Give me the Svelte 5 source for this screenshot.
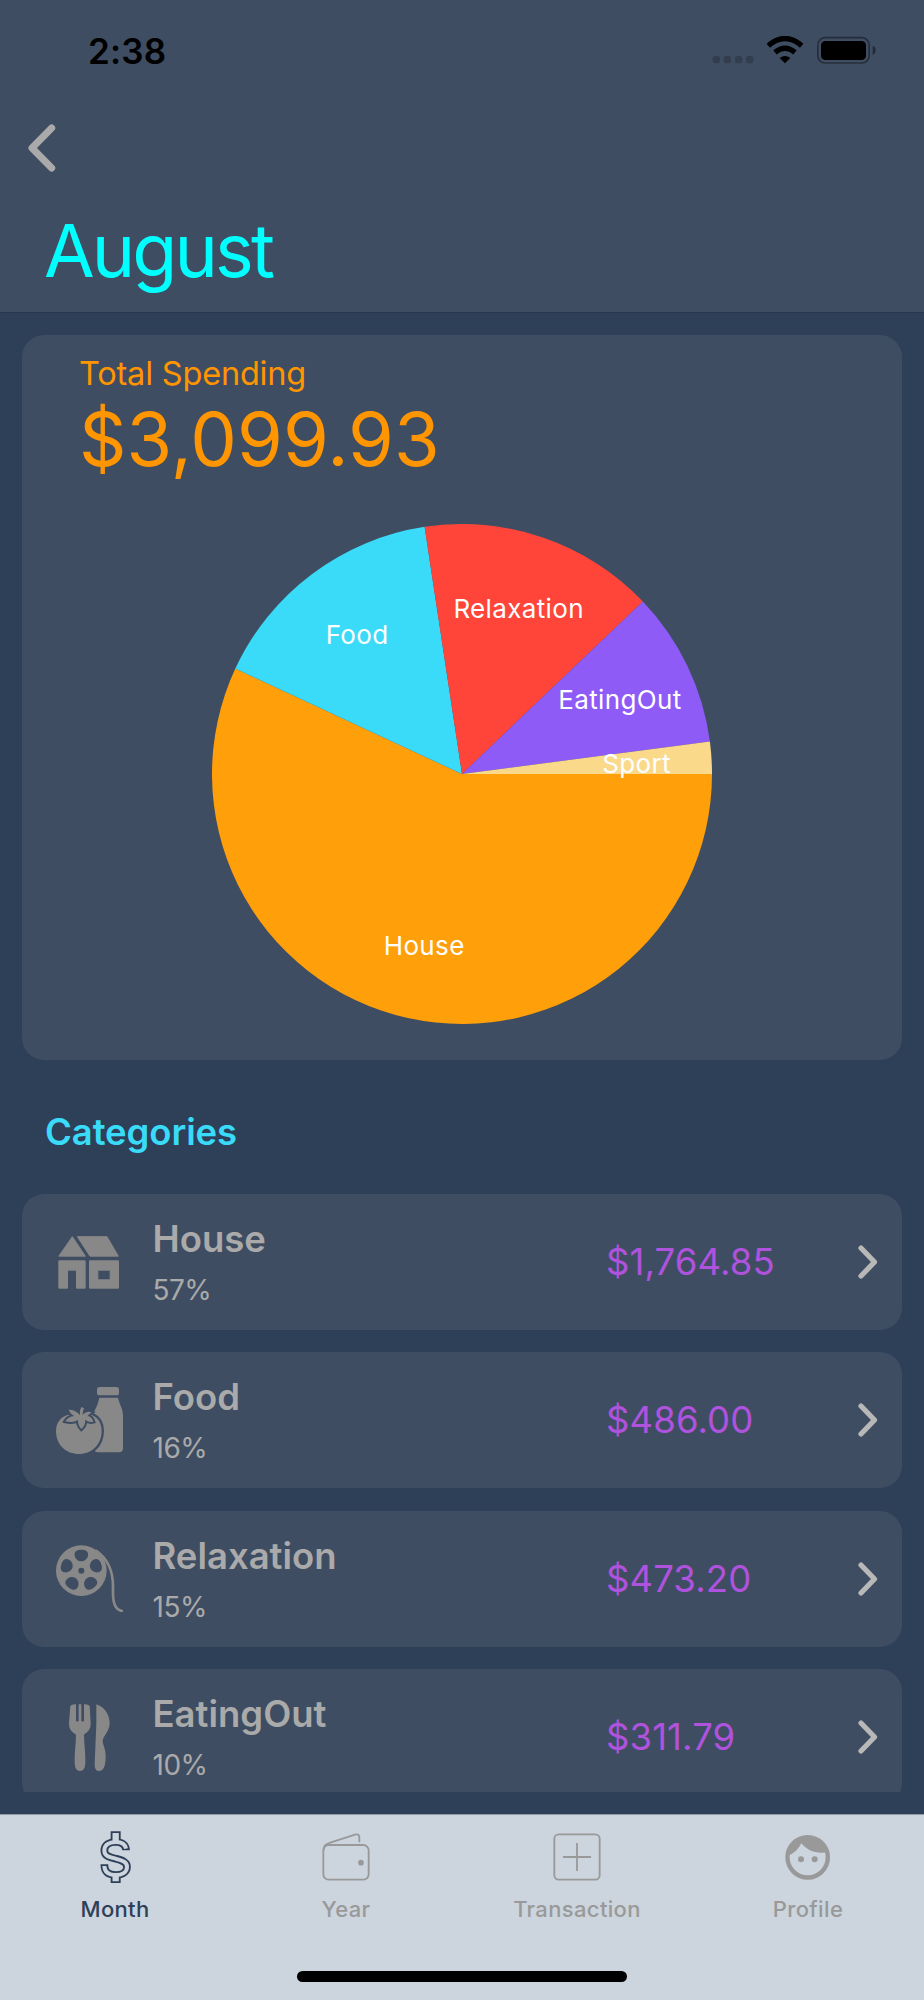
<script lang="ts">
	const total = 3099.93;

	let categories = [
		{ name: 'House', amount: 1764.85, color: '#ff9f0a', icon: 'house' },
		{ name: 'Food', amount: 486.0, color: '#39dbf8', icon: 'food' },
		{ name: 'Relaxation', amount: 473.2, color: '#ff453a', icon: 'film' },
		{ name: 'EatingOut', amount: 311.79, color: '#8e5bf7', icon: 'cutlery' },
		{ name: 'Sport', amount: 64.09, color: '#fad98b', icon: '' }
	];

	const tabs = ['Month', 'Year', 'Transaction', 'Profile'];
	let activeTab = 'Month';

	const radius = 250;

	function point(angle, r) {
		return [Math.cos(angle) * r, Math.sin(angle) * r];
	}

	function buildSlices(items) {
		let start = 0;
		return items.map((item) => {
			const end = start + (item.amount / total) * Math.PI * 2;
			const [x1, y1] = point(start, radius);
			const [x2, y2] = point(end, radius);
			const [lx, ly] = point((start + end) / 2, radius * 0.7);
			const large = end - start > Math.PI ? 1 : 0;
			start = end;
			return {
				...item,
				d: `M0 0L${x1} ${y1}A${radius} ${radius} 0 ${large} 1 ${x2} ${y2}Z`,
				lx,
				ly
			};
		});
	}

	function money(value) {
		return '$' + value.toLocaleString('en-US', { minimumFractionDigits: 2 });
	}

	$: slices = buildSlices(categories);
	$: rows = categories.slice(0, 4);
</script>

<div class="screen">
	<header>
		<div class="status">
			<span class="time">2:38</span>
			<svg class="statusIcons" viewBox="0 0 492 84">
				<g fill="#000" opacity="0.2">
					<rect x="2" y="60" width="22" height="22" rx="7" />
					<rect x="35" y="60" width="22" height="22" rx="7" />
					<rect x="69" y="60" width="22" height="22" rx="7" />
					<rect x="102" y="60" width="22" height="22" rx="7" />
				</g>
				<path d="M169 29Q219 -14 269 29" fill="none" stroke="#000" stroke-width="16" />
				<path d="M189 49Q219 25 249 49" fill="none" stroke="#000" stroke-width="16" />
				<path d="M203 66Q219 54 235 66L219 82Z" />
				<rect
					x="317.5"
					y="5"
					width="154"
					height="76"
					rx="22"
					fill="none"
					stroke="#000"
					stroke-opacity="0.4"
					stroke-width="5"
				/>
				<rect x="327" y="15" width="135" height="57" rx="13" />
				<path d="M482 29Q491 33 491 43T482 57Z" opacity="0.45" />
			</svg>
		</div>
		<button class="back" aria-label="Back">
			<svg viewBox="0 0 28 48">
				<path d="M23.7 4L4 24L23.7 44" />
			</svg>
		</button>
		<h1>August</h1>
	</header>

	<main>
		<section class="summary">
			<p class="label">Total Spending</p>
			<p class="total">{money(total)}</p>
			<svg class="pie" viewBox="-250 -250 500 500">
				{#each slices as slice}
					<path d={slice.d} fill={slice.color} />
				{/each}
				{#each slices as slice}
					<text x={slice.lx} y={slice.ly + 10}>{slice.name}</text>
				{/each}
			</svg>
		</section>

		<h2>Categories</h2>

		<div class="list">
			{#each rows as row}
				<div class="row">
					<svg class="icon" viewBox="0 0 201 201">
						{#if row.icon === 'house'}
							<g stroke="#888" stroke-width="3" stroke-linejoin="round">
								<path d="M8.5 84.5L49 26L88 84.5Z" />
								<path d="M64 26H153L187 84.5H102Z" />
								<path d="M8.5 98.5H87.5V180.5H61.5V126.5H34.5V180.5H8.5Z" />
								<path
									fill-rule="evenodd"
									d="M100.5 98.5H187.5V180.5H100.5ZM125.5 126.5V155.5H162.5V126.5Z"
								/>
							</g>
						{:else if row.icon === 'food'}
							<rect x="123" y="0" width="66" height="25" rx="8" />
							<path
								d="M130 32H186C190 52 201 64 201 86V184Q201 196 189 196H128Q118 196 112 188V78C121 62 126 50 130 32Z"
							/>
							<path
								class="cut"
								d="M69 86C92 74 137 82 137 132C137 174 106 201 69 201C31 201 0 174 0 132C0 88 44 74 69 86Z"
							/>
							<path
								class="cut leaf"
								d="M72 84Q70 70 76 60L84 64Q79 74 80 83Q92 70 107 76Q99 82 94 87Q108 89 112 104Q98 108 88 98Q88 116 76 126Q65 114 66 99Q51 109 28 103Q36 89 55 87Q44 82 38 68Q58 68 72 84Z"
							/>
						{:else if row.icon === 'film'}
							<circle cx="76" cy="77" r="76" />
							<circle class="hole" cx="76" cy="77" r="9" />
							{#each [0, 72, 144, 216, 288] as turn}
								<path
									class="hole"
									transform="rotate({turn} 76 77)"
									d="M76 14C93 14 98 22 96 32C94 42 85 49 76 49C67 49 58 42 56 32C54 22 59 14 76 14Z"
								/>
							{/each}
							<path
								d="M122 18C158 44 171 78 171 124V145C171 176 178 195 198 198"
								fill="none"
								stroke="#888"
								stroke-width="8"
								stroke-linecap="round"
							/>
						{:else}
							<path
								d="M43 5Q50 1 60 1V50Q64 55 68 50V1H76V50Q80 55 84 50V1Q94 1 101 5L104 58C104 78 95 84 84 92C84 120 89 145 88 177Q87 201 72 201Q57 201 56 177C55 145 60 120 60 92C48 84 39 78 39 58Z"
							/>
							<path
								d="M121 1C145 8 161 33 161 57C161 82 140 97 140 112C140 122 149 132 149 158C149 185 143 201 129 201Q115 201 116 179L121 60Z"
							/>
						{/if}
					</svg>
					<div class="info">
						<span class="name">{row.name}</span>
						<span class="percent">{Math.round((row.amount / total) * 100)}%</span>
					</div>
					<span class="amount">{money(row.amount)}</span>
					<svg class="chevron" viewBox="0 0 20 34">
						<path d="M3 3L16.5 17L3 31" />
					</svg>
				</div>
			{/each}
		</div>
	</main>

	<nav>
		<div class="tabs">
			{#each tabs as tab}
				<button class="tab" class:active={tab === activeTab} on:click={() => (activeTab = tab)}>
					<svg viewBox="0 0 162 162">
						{#if tab === 'Month'}
							<g transform="translate(35 1)" fill="none">
								<g stroke="currentColor" stroke-width="23">
									<path
										d="M79 60C79 43 66 35 48 35C28 35 14 44 14 61C14 77 30 81 48 85C66 90 82 94 82 109C82 126 66 134 48 134C28 134 14 126 14 102"
									/>
									<path d="M48 3V27M48 140V158" stroke-width="30" />
								</g>
								<g stroke="#ccd4dd" stroke-width="12">
									<path
										d="M79 55C77 43 66 35 48 35C28 35 14 44 14 61C14 77 30 81 48 85C66 90 82 94 82 109C82 126 66 134 48 134C28 134 15 126 14 107"
									/>
									<path d="M48 8V36M48 133V153" stroke-width="19" />
								</g>
							</g>
						{:else if tab === 'Year'}
							<g fill="none" stroke="currentColor" stroke-width="5.5">
								<rect x="13" y="45" width="136" height="104" rx="16" />
								<path d="M14 61C14 44 22 42 34 38L108 14Q121 10 121 22V37" />
							</g>
							<circle cx="126" cy="98" r="8.5" fill="currentColor" />
						{:else if tab === 'Transaction'}
							<g fill="none" stroke="currentColor" stroke-width="5.5">
								<rect x="13" y="13" width="136" height="136" rx="13" />
								<path d="M81 41V121M41 81H121" stroke-linecap="round" />
							</g>
						{:else}
							<g fill="currentColor">
								<circle
									cx="80"
									cy="82"
									r="60.5"
									fill="none"
									stroke="currentColor"
									stroke-width="13"
								/>
								<path
									d="M18 78C38 72 53 57 61 39C78 62 107 73 139 66C132 36 108 18 80 18C48 18 20 44 18 78Z"
								/>
								<circle cx="60" cy="88" r="9" />
								<circle cx="101" cy="88" r="9" />
							</g>
						{/if}
					</svg>
					<span>{tab}</span>
				</button>
			{/each}
		</div>
		<div class="homeBar"></div>
	</nav>
</div>

<style>
	:global(body) {
		margin: 0;
		background-color: #2e3f58;
	}

	.screen {
		display: flex;
		flex-direction: column;
		width: 924px;
		height: 2000px;
		overflow: hidden;
		box-sizing: border-box;
		background-color: #2e3f58;
		font-family: Inter, 'Liberation Sans', sans-serif;
	}

	h1,
	h2,
	p {
		margin: 0;
		font-weight: 400;
	}

	button {
		border: none;
		padding: 0;
		background: none;
		font-family: inherit;
	}

	header {
		flex: none;
		height: 313px;
		box-sizing: border-box;
		background-color: #3f4d62;
		border-bottom: 1px solid #2a384e;
	}

	.status {
		display: flex;
		justify-content: space-between;
		padding: 31px 48px 0 88px;
		height: 40px;
	}

	.time {
		font-size: 35px;
		font-weight: 600;
		line-height: 40px;
		letter-spacing: 0.2px;
		color: #000;
	}

	.statusIcons {
		width: 164px;
		height: 28px;
		margin-top: 5px;
	}

	.back {
		display: block;
		margin: 53px 0 0 28px;
		height: 48px;
	}

	.back svg {
		display: block;
		width: 28px;
		height: 48px;
	}

	.back path,
	.chevron path {
		fill: none;
		stroke: #aaa;
		stroke-width: 7;
		stroke-linecap: round;
		stroke-linejoin: round;
	}

	h1 {
		margin: 39px 0 0 44px;
		font-size: 73.5px;
		line-height: 80px;
		letter-spacing: -2.9px;
		color: #00ffff;
	}

	main {
		flex: none;
		height: 1479px;
		overflow: hidden;
		padding: 0 22px;
	}

	.summary {
		height: 724.5px;
		margin-top: 22px;
		box-sizing: border-box;
		padding: 19px 57px 0;
		border-radius: 22px;
		background-color: #3f4d62;
		color: #ff9500;
	}

	.label {
		font-size: 32.5px;
		line-height: 40px;
		letter-spacing: -0.2px;
	}

	.total {
		font-size: 74px;
		line-height: 91px;
		letter-spacing: 0.1px;
	}

	.pie {
		display: block;
		width: 500px;
		height: 500px;
		margin: 38.5px auto 0;
	}

	.pie text {
		font-size: 26px;
		letter-spacing: 0.35px;
		fill: #fff;
		text-anchor: middle;
	}

	h2 {
		padding: 45px 0 0 23px;
		height: 89px;
		font-size: 36.5px;
		font-weight: 600;
		line-height: 54px;
		letter-spacing: -0.1px;
		color: #39dbf8;
	}

	.list {
		display: flex;
		flex-direction: column;
		gap: 22.6px;
	}

	.row {
		display: flex;
		align-items: center;
		flex: none;
		height: 136px;
		box-sizing: border-box;
		padding: 0 24px 0 34px;
		border-radius: 22px;
		background-color: #3f4d62;
	}

	.icon {
		width: 67px;
		height: 67px;
		fill: #888;
	}

	.cut {
		stroke: #3f4d62;
		stroke-width: 14;
		paint-order: stroke;
	}

	.leaf {
		stroke-width: 12;
	}

	.hole {
		fill: #3f4d62;
	}

	.info {
		display: flex;
		flex-direction: column;
		width: 453.5px;
		margin-left: 29.5px;
		padding-top: 5px;
		color: #aaa;
	}

	.name {
		font-size: 36.5px;
		font-weight: 600;
		line-height: 52px;
	}

	.percent {
		font-size: 28px;
		line-height: 51px;
		letter-spacing: -0.5px;
	}

	.amount {
		flex: 1;
		font-size: 36.5px;
		letter-spacing: 0.1px;
		color: #af52de;
	}

	.chevron {
		width: 20px;
		height: 34px;
	}

	.chevron path {
		stroke: #b8b8b8;
		stroke-width: 5.2;
	}

	nav {
		display: flex;
		flex-direction: column;
		align-items: center;
		flex: 1;
		margin-top: 22px;
		border-top: 1px solid #8f99a8;
		background-color: #ccd4dd;
	}

	.tabs {
		display: flex;
		width: 100%;
	}

	.tab {
		display: flex;
		flex: 1;
		flex-direction: column;
		align-items: center;
		gap: 10px;
		padding: 14.5px 1px 0 0;
		color: #999;
	}

	.tab svg {
		width: 54px;
		height: 54px;
	}

	.tab span {
		font-size: 22px;
		font-weight: 500;
		line-height: 30px;
		letter-spacing: 0.35px;
	}

	.active {
		color: #2e3f58;
	}

	.homeBar {
		width: 330px;
		height: 11px;
		margin-top: 47px;
		border-radius: 6px;
		background-color: #000;
	}
</style>
